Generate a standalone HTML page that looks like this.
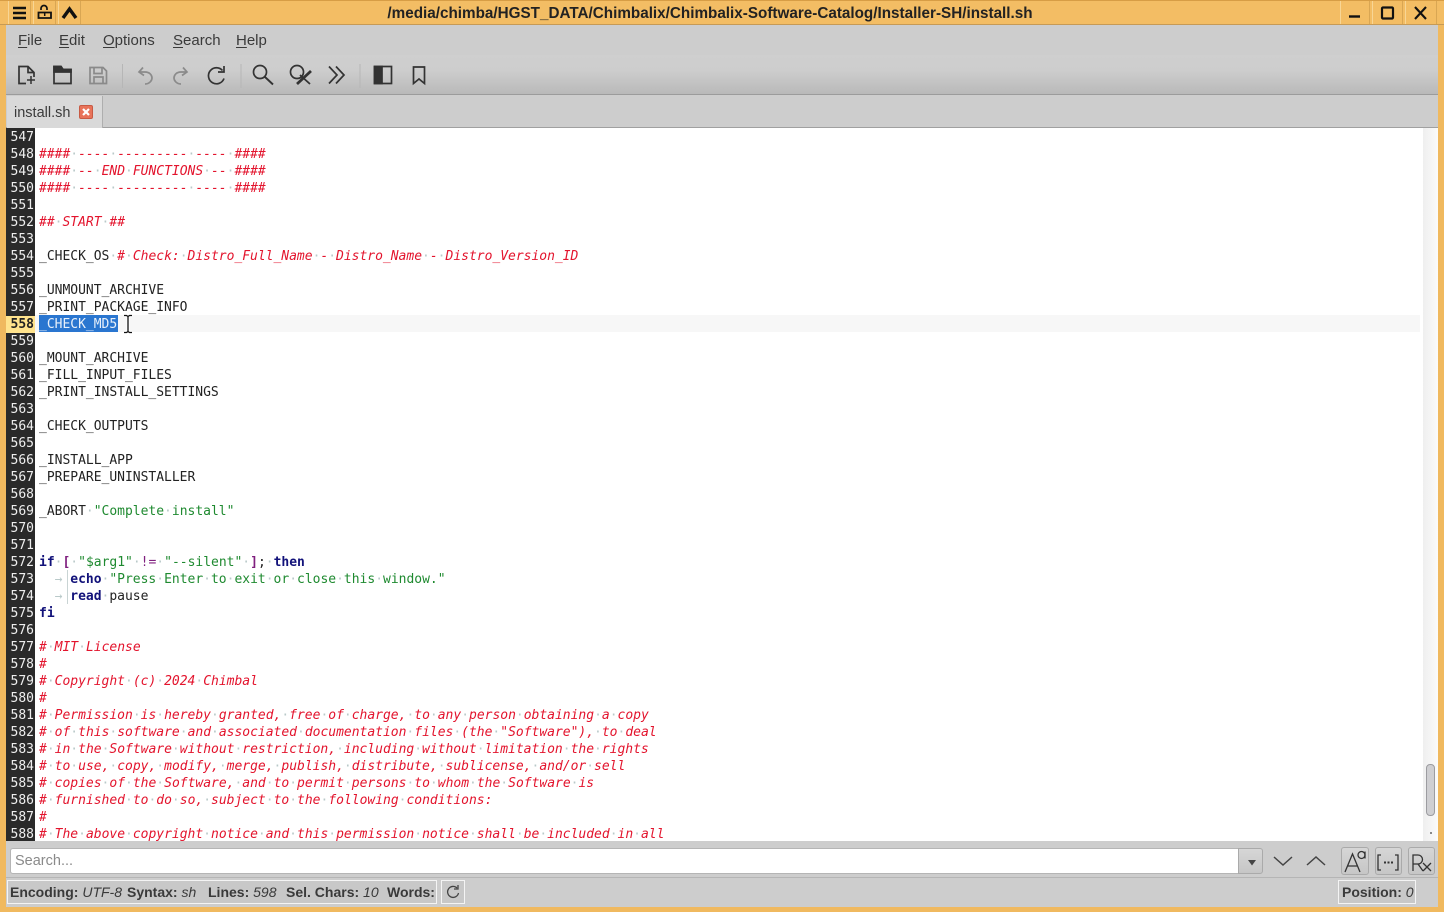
<!DOCTYPE html>
<html lang="en"><head><meta charset="utf-8"><title>install.sh</title>
<style>
*{margin:0;padding:0;box-sizing:border-box}
html,body{width:1444px;height:912px;overflow:hidden;background:#f0b95f}
body{position:relative;font-family:"Liberation Sans",sans-serif;color:#333}
.a{position:absolute}
.ui{position:absolute;white-space:nowrap;font-size:15px;line-height:20px;color:#3a3a3a}
.ui u{text-decoration-thickness:1px;text-underline-offset:2px}
#code{position:absolute;left:35px;top:128px;width:1388px;height:713px;background:#fff;overflow:hidden}
#gut{position:absolute;left:6px;top:128px;width:29px;height:713px;background:#2a2a2a;overflow:hidden;font:13px/17px "DejaVu Sans Mono",monospace;color:#eee;text-align:right;padding-right:1px;padding-top:1px;white-space:pre}
#lines{position:absolute;left:4px;top:1px;font:13px/17px "DejaVu Sans Mono",monospace;letter-spacing:-0.0125px;color:#222;white-space:pre}
i{font-style:normal;color:#b9c9c9}
.c{color:#e3142d;font-style:italic}
.c i{font-style:normal}
.s{color:#1f8a30}
.k{color:#12127a;font-weight:bold}
.o{color:#80207f}
.b{color:#80207f;font-weight:bold}
.btn{position:absolute;top:847px;height:28px;border:1px solid #aaa;border-radius:3px;background:linear-gradient(#d6d6d6,#c6c6c6)}
.st{position:absolute;top:880px;height:24px;border:1px solid #f4f4f4;background:#c8c8c8}
.st b{font-weight:bold}.st em{font-style:italic}
svg{position:absolute;overflow:visible}
</style></head>
<body>
<!-- title bar -->
<div class="a" style="left:0;top:0;width:1444px;height:25px;background:#f3bd64;border-top:1px solid #d79d45;border-bottom:1px solid #c69a56"></div>
<div class="a" style="left:8px;top:1px;width:23px;height:23px;border-left:1px solid #f8d695;border-right:1px solid #d9a653"></div>
<div class="a" style="left:33px;top:1px;width:23px;height:23px;border-left:1px solid #f8d695;border-right:1px solid #d9a653"></div>
<div class="a" style="left:58px;top:1px;width:23px;height:23px;border-left:1px solid #f8d695;border-right:1px solid #d9a653"></div>
<div class="a" style="left:1340px;top:1px;width:30px;height:23px;border-left:1px solid #f8d695;border-right:1px solid #d9a653"></div>
<div class="a" style="left:1372px;top:1px;width:31px;height:23px;border-left:1px solid #f8d695;border-right:1px solid #d9a653"></div>
<div class="a" style="left:1405px;top:1px;width:32px;height:23px;border-left:1px solid #f8d695;border-right:1px solid #d9a653"></div>
<svg style="left:0;top:0" width="1444" height="25" fill="none" stroke="#111">
<path d="M13 8h13M13 13h13M13 18h13" stroke-width="2.400"/>
<path d="M41 10V8.500a3 3 0 0 1 6 0V10" stroke-width="1.700"/><path d="M38.500 12.500h12.500v5.500h-12.500z" stroke-width="1.800"/><path d="M44.700 13v3" stroke-width="1.500"/>
<path d="M63 18l6.500-9 6.500 9" stroke-width="3.400"/>
<path d="M1349 16.500h11" stroke-width="2.400"/>
<rect x="1382" y="7.500" width="11" height="11" rx="1" stroke-width="2.200"/>
<path d="M1415 7l11 12M1426 7l-11 12" stroke-width="2.100"/>
</svg>
<div class="ui" style="left:0;width:1420px;text-align:center;top:4px;font-weight:bold;font-size:15.250px;color:#222">/media/chimba/HGST_DATA/Chimbalix/Chimbalix-Software-Catalog/Installer-SH/install.sh</div>
<!-- window body -->
<div class="a" style="left:6px;top:25px;width:1432px;height:882px;background:#cdcdcd"></div>
<div class="a" style="left:6px;top:55px;width:1432px;height:39px;background:linear-gradient(#cfcfcf 0,#cdcdcd 40%,#b9b9b9 100%)"></div>
<div class="a" style="left:6px;top:94px;width:1432px;height:1px;background:#9b9b9b"></div>
<div class="ui" style="left:18px;top:31px"><u>F</u>ile</div>
<div class="ui" style="left:59px;top:31px"><u>E</u>dit</div>
<div class="ui" style="left:103px;top:31px"><u>O</u>ptions</div>
<div class="ui" style="left:173px;top:31px"><u>S</u>earch</div>
<div class="ui" style="left:236px;top:31px"><u>H</u>elp</div>
<!-- toolbar icons -->
<svg style="left:0;top:0" width="440" height="95" fill="none" stroke="#333" stroke-width="1.700">
<path d="M26 83.500H19V66.500h9l6 6v4.500"/><path d="M28 66.500v6h6"/><path d="M27 80h8M31 76v8" stroke-width="1.500"/>
<path d="M54 83.500V66.500h7l2 3h8v14z"/><path d="M54 72h17V69.500h-8l-2-3h-7z" fill="#333"/>
<g stroke="#8a8a8a"><path d="M90 83.500V67.500h13l3.500 3.500v12.500z"/><path d="M94 67.500v6h8v-6M94 83v-6h9v6"/></g>
<path d="M122.500 64v24" stroke="#b6b6b6" stroke-width="1"/>
<g stroke="#8b8b8b"><path d="M143 67.500l-4 4.500 5 3.500"/><path d="M139 72h6c5 0 7 3.500 7 6s-2.500 6-7 6"/>
<path d="M183 67.500l4 4.500-5 3.500"/><path d="M187 72h-6c-5 0-7 3.500-7 6s2.500 6 7 6"/></g>
<path d="M241 64v24" stroke="#b6b6b6" stroke-width="1"/>
<path d="M222.500 70.500a8 8 0 1 0 1.500 8"/><path d="M224 66v6h-6"/>
<circle cx="260" cy="72" r="6.500"/><path d="M265 77l8 7.500" stroke-width="1.900"/>
<circle cx="297" cy="72" r="6.500"/><path d="M297 84l14-13" stroke-width="2.800"/><path d="M300 75l10 9" stroke-width="1.800"/>
<path d="M329 66.500l8 8.500-8 8.500M336 66.500l8 8.500-8 8.500"/>
<path d="M360 64v24" stroke="#b6b6b6" stroke-width="1"/>
<rect x="374.500" y="66.500" width="17" height="17"/><rect x="374.500" y="66.500" width="7.500" height="17" fill="#333"/>
<path d="M413.500 67h11v16.500l-5.500-4.500-5.500 4.500z"/>
</svg>
<!-- tabs -->
<div class="a" style="left:6px;top:127px;width:1432px;height:1px;background:#a0a0a0"></div>
<div class="a" style="left:7px;top:96px;width:96px;height:32px;background:#d9d9d9;border-right:1px solid #aeaeae"></div>
<div class="ui" style="left:14px;top:103px;font-size:14.500px">install.sh</div>
<div class="a" style="left:79px;top:105px;width:14px;height:14px;background:#e8735a;border:1px solid #c85a44;border-radius:2px"></div>
<svg style="left:79px;top:105px" width="14" height="14" fill="none" stroke="#fff" stroke-width="2.200"><path d="M4 4l6 6M10 4l-6 6"/></svg>
<!-- code -->
<div id="gut">547
548
549
550
551
552
553
554
555
556
557
<span style="display:inline-block;width:29px;margin-right:-1px;background:#ffe38d;color:#222;font-weight:bold;padding-right:1px">558</span>
559
560
561
562
563
564
565
566
567
568
569
570
571
572
573
574
575
576
577
578
579
580
581
582
583
584
585
586
587
588</div>
<div id="code">
<div class="a" style="left:0;top:187px;width:1385px;height:17px;background:#f7f7f7"></div>
<div class="a" style="left:4px;top:187px;width:79px;height:17px;background:#2a76d0"></div>
<div class="a" style="left:32px;top:442px;width:1px;height:34px;background:#c9d4d4"></div>
<div id="lines">
<span class="c">####<i>·</i>----<i>·</i>---------<i>·</i>----<i>·</i>####</span>
<span class="c">####<i>·</i>--<i>·</i>END<i>·</i>FUNCTIONS<i>·</i>--<i>·</i>####</span>
<span class="c">####<i>·</i>----<i>·</i>---------<i>·</i>----<i>·</i>####</span>

<span class="c">##<i>·</i>START<i>·</i>##</span>

_CHECK_OS<i>·</i><span class="c">#<i>·</i>Check:<i>·</i>Distro_Full_Name<i>·</i>-<i>·</i>Distro_Name<i>·</i>-<i>·</i>Distro_Version_ID</span>

_UNMOUNT_ARCHIVE
_PRINT_PACKAGE_INFO
<span style="color:#e8f0fa">_CHECK_MD5</span>

_MOUNT_ARCHIVE
_FILL_INPUT_FILES
_PRINT_INSTALL_SETTINGS

_CHECK_OUTPUTS

_INSTALL_APP
_PREPARE_UNINSTALLER

_ABORT<i>·</i><span class="s">"Complete<i>·</i>install"</span>


<span class="k">if</span><i>·</i><span class="b">[</span><i>·</i><span class="s">"$arg1"</span><i>·</i><span class="o">!=</span><i>·</i><span class="s">"--silent"</span><i>·</i><span class="b">]</span>;<i>·</i><span class="k">then</span>
<i>  → </i><span class="k">echo</span><i>·</i><span class="s">"Press<i>·</i>Enter<i>·</i>to<i>·</i>exit<i>·</i>or<i>·</i>close<i>·</i>this<i>·</i>window."</span>
<i>  → </i><span class="k">read</span><i>·</i>pause
<span class="k">fi</span>

<span class="c">#<i>·</i>MIT<i>·</i>License</span>
<span class="c">#</span>
<span class="c">#<i>·</i>Copyright<i>·</i>(c)<i>·</i>2024<i>·</i>Chimbal</span>
<span class="c">#</span>
<span class="c">#<i>·</i>Permission<i>·</i>is<i>·</i>hereby<i>·</i>granted,<i>·</i>free<i>·</i>of<i>·</i>charge,<i>·</i>to<i>·</i>any<i>·</i>person<i>·</i>obtaining<i>·</i>a<i>·</i>copy</span>
<span class="c">#<i>·</i>of<i>·</i>this<i>·</i>software<i>·</i>and<i>·</i>associated<i>·</i>documentation<i>·</i>files<i>·</i>(the<i>·</i>"Software"),<i>·</i>to<i>·</i>deal</span>
<span class="c">#<i>·</i>in<i>·</i>the<i>·</i>Software<i>·</i>without<i>·</i>restriction,<i>·</i>including<i>·</i>without<i>·</i>limitation<i>·</i>the<i>·</i>rights</span>
<span class="c">#<i>·</i>to<i>·</i>use,<i>·</i>copy,<i>·</i>modify,<i>·</i>merge,<i>·</i>publish,<i>·</i>distribute,<i>·</i>sublicense,<i>·</i>and/or<i>·</i>sell</span>
<span class="c">#<i>·</i>copies<i>·</i>of<i>·</i>the<i>·</i>Software,<i>·</i>and<i>·</i>to<i>·</i>permit<i>·</i>persons<i>·</i>to<i>·</i>whom<i>·</i>the<i>·</i>Software<i>·</i>is</span>
<span class="c">#<i>·</i>furnished<i>·</i>to<i>·</i>do<i>·</i>so,<i>·</i>subject<i>·</i>to<i>·</i>the<i>·</i>following<i>·</i>conditions:</span>
<span class="c">#</span>
<span class="c">#<i>·</i>The<i>·</i>above<i>·</i>copyright<i>·</i>notice<i>·</i>and<i>·</i>this<i>·</i>permission<i>·</i>notice<i>·</i>shall<i>·</i>be<i>·</i>included<i>·</i>in<i>·</i>all</span>
</div>
</div>
<!-- I-beam cursor -->
<svg style="left:122px;top:314px" width="12" height="20" fill="none"><path d="M2 1.500h2.500l1.500 1 1.500-1H10M6 2.500v15M2 18.500h2.500l1.500-1 1.500 1H10" stroke="#fff" stroke-width="3.400"/><path d="M2 1.500h2.500l1.500 1 1.500-1H10M6 2.500v15M2 18.500h2.500l1.500-1 1.500 1H10" stroke="#111" stroke-width="1.300"/></svg>
<!-- scrollbar -->
<div class="a" style="left:1423px;top:128px;width:15px;height:713px;background:linear-gradient(90deg,#efefef,#fbfbfb)"></div>
<div class="a" style="left:1426px;top:764px;width:9px;height:52px;background:#cfcfd2;border:1px solid #9c9ca0;border-radius:4px"></div>
<div class="a" style="left:1430px;top:832px;width:2px;height:2px;background:#888"></div>
<!-- search -->
<div class="a" style="left:10px;top:848px;width:1229px;height:26px;background:#fff;border:1px solid #b5b5b5;border-right:0;border-radius:3px 0 0 3px"></div>
<div class="ui" style="left:15px;top:851px;font-size:14.500px;color:#8a8a8a">Search...</div>
<div class="a" style="left:1238px;top:848px;width:25px;height:26px;background:linear-gradient(#d6d6d6,#c6c6c6);border:1px solid #aaa;border-radius:0 3px 3px 0"></div>
<svg style="left:1230px;top:840px" width="214" height="40" fill="none" stroke="#444" stroke-width="1.500">
<path d="M18 20h8l-4 5.500z" fill="#444" stroke="none"/>
<path d="M44 17l9 8 9-8M77 25l9-8 9 8"/>
</svg>
<div class="btn" style="left:1341px;width:28px"></div>
<div class="btn" style="left:1375px;width:27px"></div>
<div class="btn" style="left:1408px;width:27px"></div>
<svg style="left:0;top:0" width="1444" height="912" fill="none" stroke="#333" stroke-width="1.300">
<path d="M1345 872l7.500-18 7.500 18M1348 866h9"/><circle cx="1361.500" cy="855" r="3.500"/><path d="M1365 851.500v7"/>
<path d="M1381 855h-3v15h3M1395 855h3v15h-3"/><path d="M1384 862.500h2M1387.500 862.500h2M1391 862.500h2" stroke-width="2"/>
<path d="M1413 871V855h5a4.500 4.500 0 0 1 0 9h-5M1418 864l5 7M1423 863l8 8M1431 863l-8 8"/>
</svg>
<!-- status -->
<div class="a" style="left:6px;top:877px;width:1432px;height:1px;background:#b5b5b5"></div>
<div class="st" style="left:7px;width:430px"></div>
<div class="ui" style="left:10px;top:882px;font-size:14px"><b>Encoding:</b> <em>UTF-8</em></div>
<div class="ui" style="left:127px;top:882px;font-size:14px"><b>Syntax:</b> <em>sh</em></div>
<div class="ui" style="left:208px;top:882px;font-size:14px"><b>Lines:</b> <em>598</em></div>
<div class="ui" style="left:286px;top:882px;font-size:14px"><b>Sel. Chars:</b> <em>10</em></div>
<div class="ui" style="left:387px;top:882px;font-size:14px"><b>Words:</b></div>
<div class="st" style="left:441px;width:24px"></div>
<svg style="left:441px;top:880px" width="24" height="24" fill="none" stroke="#444" stroke-width="1.300"><path d="M16 8a5.500 5.500 0 1 0 1.500 5"/><path d="M17 5v4h-4"/></svg>
<div class="st" style="left:1338px;width:78px"></div>
<div class="ui" style="left:1342px;top:882px;font-size:14px"><b>Position:</b> <em>0</em></div>
</body></html>
